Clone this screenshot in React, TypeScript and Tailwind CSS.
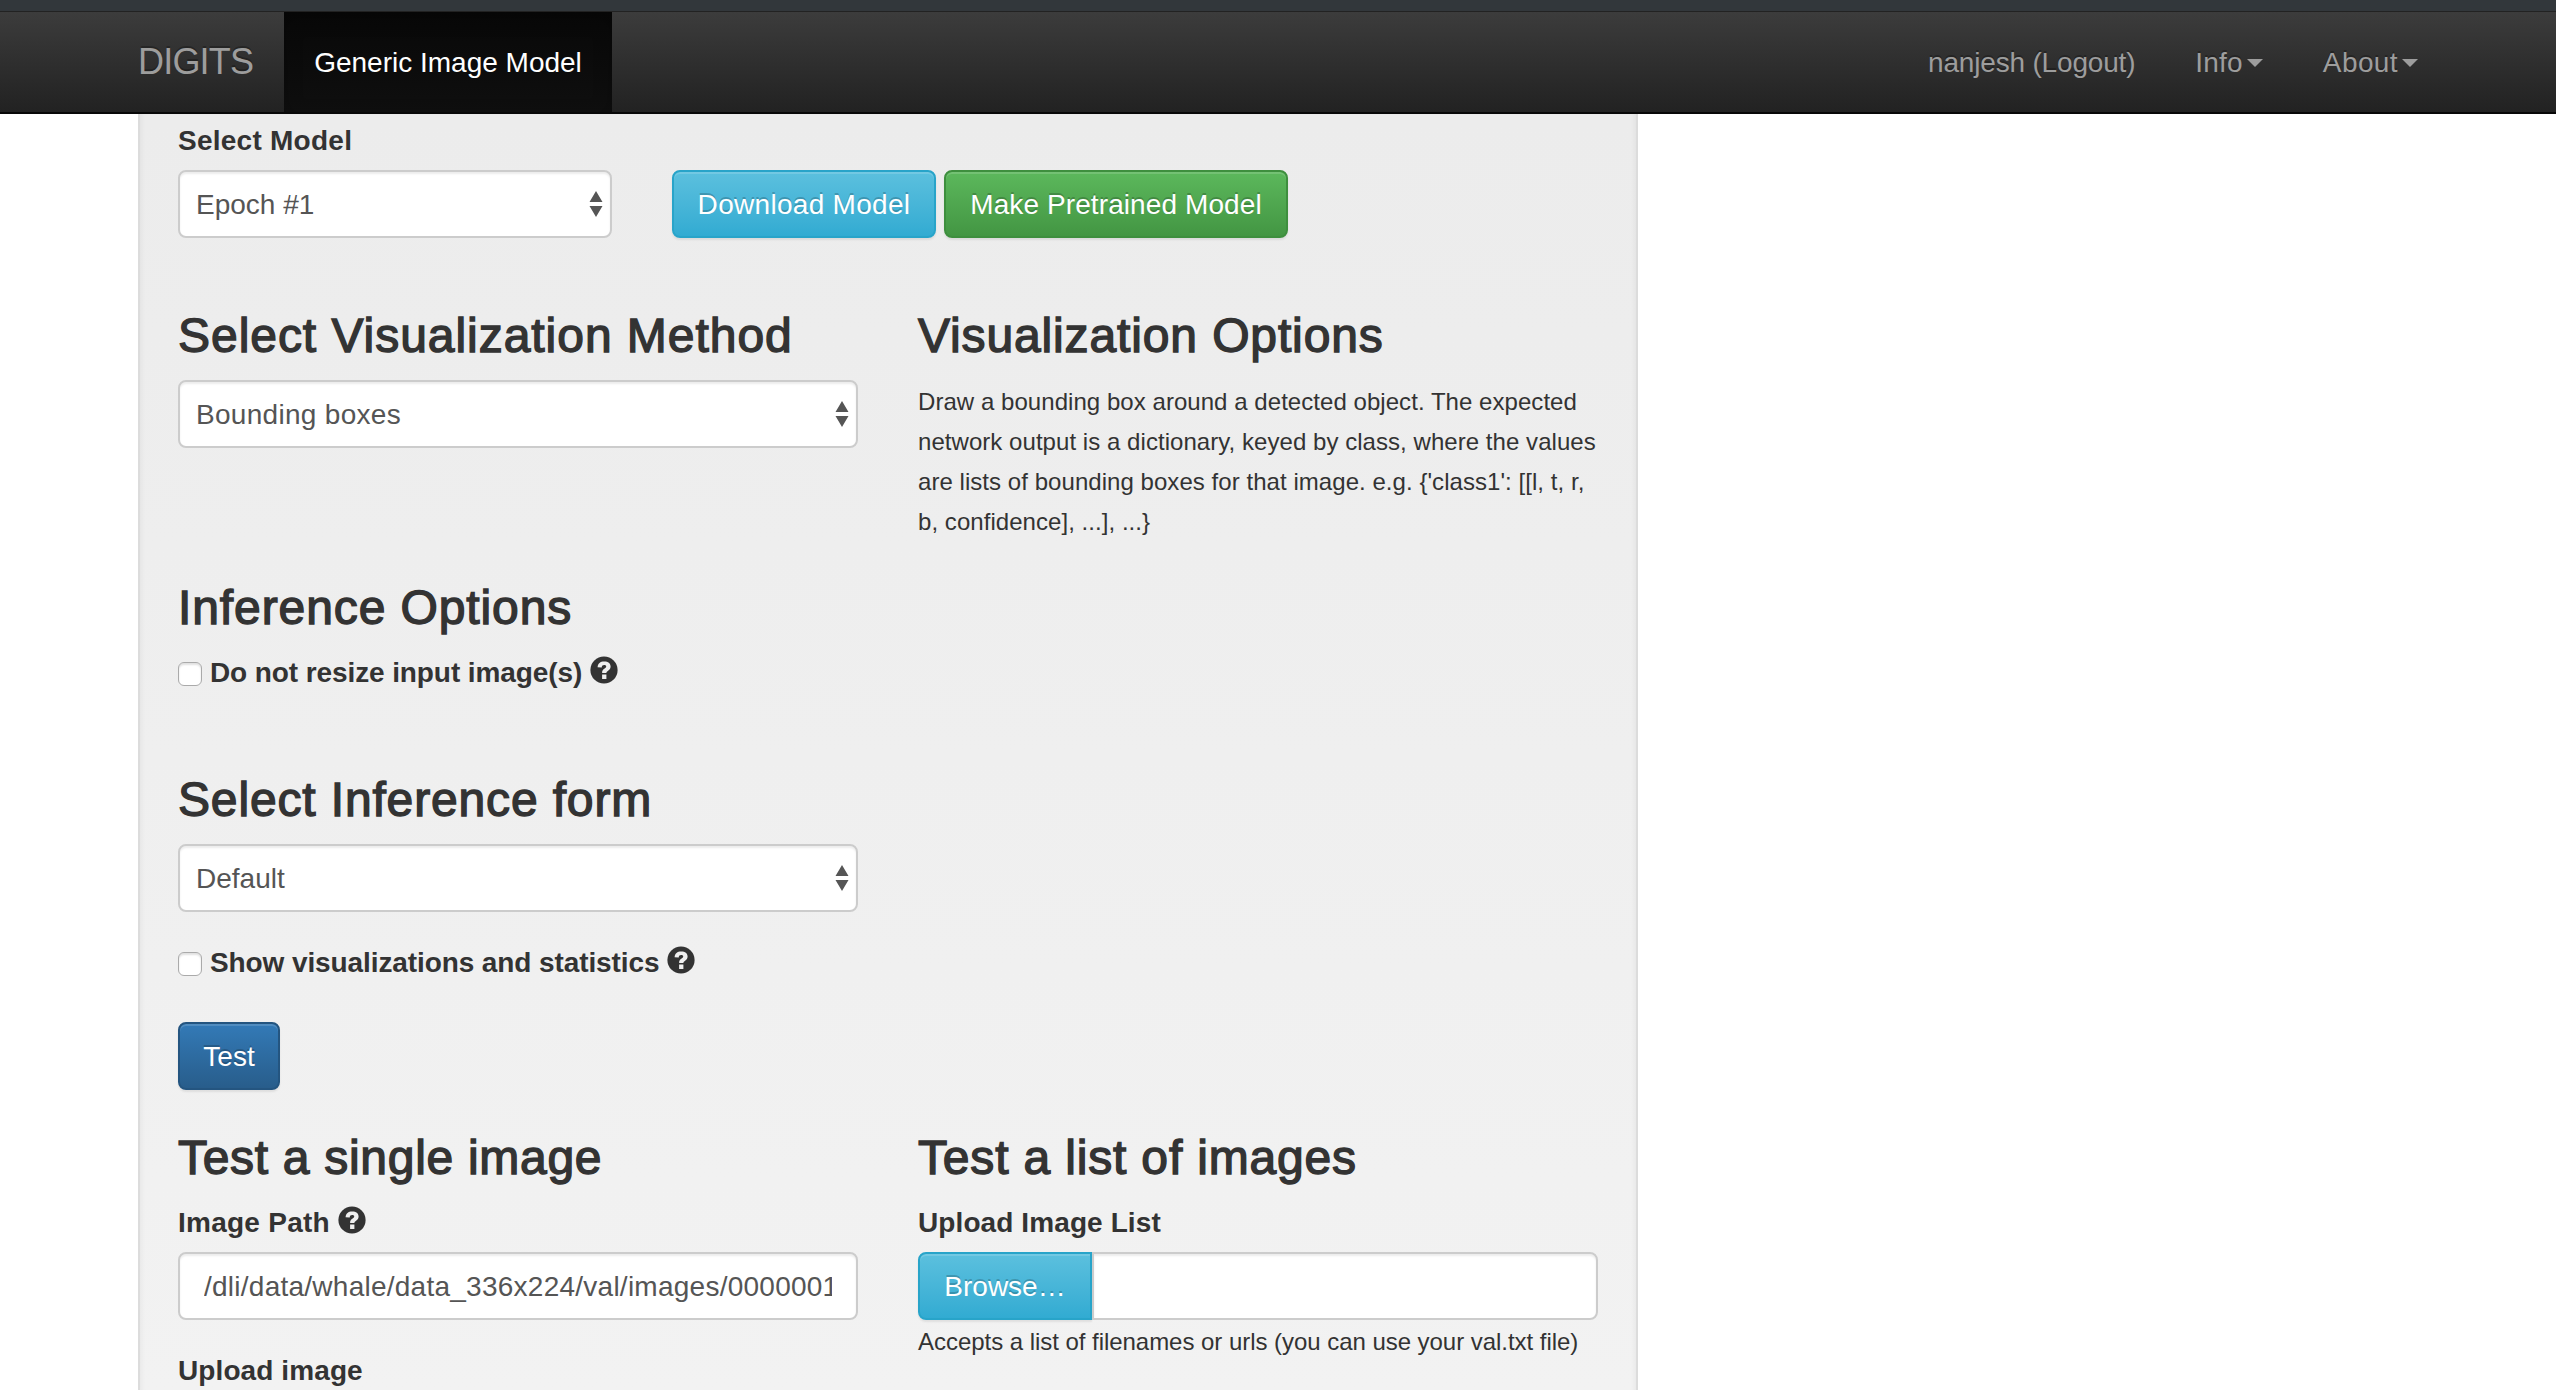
import type { ReactNode } from "react";

function Caret() {
  return <span className="mt-[2px] ml-1 h-0 w-0 border-x-8 border-t-8 border-x-transparent border-t-[#9d9d9d]" />;
}

function NavLink({ children, caret, className = "" }: { children: ReactNode; caret?: boolean; className?: string }) {
  return (
    <a
      className={`flex items-center px-[30px] text-[28px] leading-10 whitespace-nowrap text-[#9d9d9d] [text-shadow:0_-2px_0_rgba(0,0,0,.25)] ${className}`}
    >
      <span className="pt-[2px]">{children}</span>
      {caret && <Caret />}
    </a>
  );
}

function Heading({ children, className = "" }: { children: ReactNode; className?: string }) {
  return (
    <h3 className={`h-[52px] pt-px text-[48px] leading-[52px] whitespace-nowrap [-webkit-text-stroke:1.4px_#333] ${className}`}>
      {children}
    </h3>
  );
}

function Help() {
  return (
    <svg className="mb-1 ml-2 h-7 w-7" viewBox="0 0 28 28">
      <circle cx="14" cy="14" r="13.6" fill="#333" />
      <path
        d="M7.6 11.2C7.8 7.500 10.300 5.500 14.200 5.500c4 0 6.400 1.900 6.400 5 0 2.300-1.300 3.400-2.700 4.400-1.200.8-1.500 1.100-1.500 2.100h-4.300c0-2.400.9-3.400 2.500-4.400 1.100-.7 1.600-1.100 1.600-2 0-1-.8-1.500-2-1.500-1.500 0-2.300.8-2.500 2.400z"
        fill="#efefef"
      />
      <rect x="12.100" y="18.500" width="4.300" height="4.500" fill="#efefef" />
    </svg>
  );
}

function Select({ value, className = "" }: { value: string; className?: string }) {
  return (
    <div
      className={`flex h-[68px] items-center justify-between rounded-lg border-2 border-[#ccc] bg-white pr-[7px] pl-4 text-[28px] text-[#555] shadow-[inset_0_2px_2px_rgba(0,0,0,.075)] ${className}`}
    >
      <span className="pt-px">{value}</span>
      <svg className="h-[26px] w-[14px]" viewBox="0 0 14 26" fill="#555">
        <path d="M7 0l6.500 11H.5zM.5 15h13L7 26z" />
      </svg>
    </div>
  );
}

const buttonBase =
  "flex h-[68px] items-center justify-center border-2 pt-px text-[28px] whitespace-nowrap text-white [text-shadow:0_-2px_0_rgba(0,0,0,.2)] shadow-[inset_0_2px_0_rgba(255,255,255,.15),0_2px_2px_rgba(0,0,0,.075)]";

function CheckRow({ label, className = "" }: { label: string; className?: string }) {
  return (
    <label className={`flex h-10 items-center text-[28px] font-bold tracking-[-0.1px] whitespace-nowrap ${className}`}>
      <span className="mt-1 mr-2 h-6 w-6 rounded-md border border-[#aaa] bg-white shadow-[inset_0_2px_2px_rgba(0,0,0,.12)]" />
      <span className="pt-px">{label}</span>
      <Help />
    </label>
  );
}

export default function App() {
  return (
    <div className="flex h-screen flex-col overflow-hidden bg-white font-['Liberation_Sans',Arial,sans-serif] text-[#333]">
      <div className="h-3 shrink-0 border-b border-[#222] bg-[#32373b]" />
      <nav className="flex h-[102px] shrink-0 border-b-2 border-[#080808] bg-linear-to-b from-[#3c3c3c] to-[#222] px-[108px]">
        <a className="flex w-[176px] items-center pl-[30px] text-[36px] tracking-[-0.8px] text-[#9d9d9d] [text-shadow:0_-2px_0_rgba(0,0,0,.25)]">
          DIGITS
        </a>
        <a className="flex w-[328px] items-center justify-center bg-linear-to-b from-[#080808] to-[#0f0f0f] pt-px text-[28px] whitespace-nowrap text-white shadow-[inset_0_6px_18px_rgba(0,0,0,.25)]">
          Generic Image Model
        </a>
        <div className="ml-auto flex">
          <NavLink className="tracking-[-0.18px]">nanjesh (Logout)</NavLink>
          <NavLink caret className="tracking-[0.2px]">Info</NavLink>
          <NavLink caret className="tracking-[0.4px]">About</NavLink>
        </div>
      </nav>

      <main className="ml-[138px] w-[1500px] flex-1 border-x-2 border-[#dcdcdc] bg-linear-to-b from-[#ececec] to-[#f2f2f2] px-[38px] pt-[6px] shadow-[inset_4px_0_4px_-2px_rgba(0,0,0,.04),inset_-4px_0_4px_-2px_rgba(0,0,0,.04)]">
        <div className="h-10 pt-px text-[28px] leading-10 font-bold tracking-[0.25px]">Select Model</div>
        <div className="mt-[10px] flex">
          <Select value="Epoch #1" className="w-[434px]" />
          <button className={`${buttonBase} ml-[60px] w-[264px] rounded-lg border-[#28a4c9] bg-linear-to-b from-[#5bc0de] to-[#31abd2] tracking-[0.3px]`}>
            Download Model
          </button>
          <button className={`${buttonBase} ml-2 w-[344px] rounded-lg border-[#3e8f3e] bg-linear-to-b from-[#5cb85c] to-[#439643] tracking-[0.1px]`}>
            Make Pretrained Model
          </button>
        </div>

        <div className="mt-[71px] grid grid-cols-2 gap-[60px]">
          <div>
            <Heading className="tracking-[0.96px]">Select Visualization Method</Heading>
            <Select value="Bounding boxes" className="mt-[19px] tracking-[0.3px]" />
          </div>
          <div>
            <Heading className="tracking-[0.87px]">Visualization Options</Heading>
            <p className="mt-[20px] h-40 pt-px text-[24px] leading-10 tracking-[0.05px] whitespace-nowrap">
              Draw a bounding box around a detected object. The expected
              <br />
              network output is a dictionary, keyed by class, where the values
              <br />
              are lists of bounding boxes for that image. e.g. {"{'class1': [[l, t, r,"}
              <br />
              {"b, confidence], ...], ...}"}
            </p>
          </div>
        </div>

        <Heading className="mt-[40px] tracking-[0.9px]">Inference Options</Heading>
        <CheckRow label="Do not resize input image(s)" className="mt-[19px]" />

        <Heading className="mt-[81px] tracking-[0.85px]">Select Inference form</Heading>
        <Select value="Default" className="mt-[19px] w-[680px]" />
        <CheckRow label="Show visualizations and statistics" className="mt-[30px]" />
        <button className={`${buttonBase} mt-10 w-[102px] rounded-lg border-[#245580] bg-linear-to-b from-[#337ab7] to-[#285d8b]`}>
          Test
        </button>

        <div className="mt-[41px] grid grid-cols-2 gap-[60px]">
          <div>
            <Heading className="tracking-[0.7px]">Test a single image</Heading>
            <label className="mt-[19px] flex h-10 items-center text-[28px] font-bold tracking-[0.25px]">
              <span className="pt-px">Image Path</span>
              <Help />
            </label>
            <div className="mt-[10px] flex h-[68px] items-center rounded-lg border-2 border-[#ccc] bg-white px-6 pt-px text-[28px] tracking-[0.25px] text-[#555] shadow-[inset_0_2px_2px_rgba(0,0,0,.075)]">
              <span className="w-[630px] overflow-hidden whitespace-nowrap">
                /dli/data/whale/data_336x224/val/images/0000001
              </span>
            </div>
            <div className="mt-[30px] pt-px text-[28px] leading-10 font-bold tracking-[0.1px]">Upload image</div>
          </div>
          <div>
            <Heading className="tracking-[0.83px]">Test a list of images</Heading>
            <div className="mt-[19px] h-10 pt-px text-[28px] leading-10 font-bold tracking-[0.1px]">Upload Image List</div>
            <div className="mt-[10px] flex">
              <button className={`${buttonBase} w-[174px] rounded-l-lg border-[#28a4c9] bg-linear-to-b from-[#5bc0de] to-[#31abd2]`}>
                Browse…
              </button>
              <div className="h-[68px] flex-1 rounded-r-lg border-2 border-[#ccc] bg-white shadow-[inset_0_2px_2px_rgba(0,0,0,.075)]" />
            </div>
            <p className="mt-[2px] text-[24px] leading-10 tracking-[-0.04px] whitespace-nowrap">
              Accepts a list of filenames or urls (you can use your val.txt file)
            </p>
          </div>
        </div>
      </main>
    </div>
  );
}
